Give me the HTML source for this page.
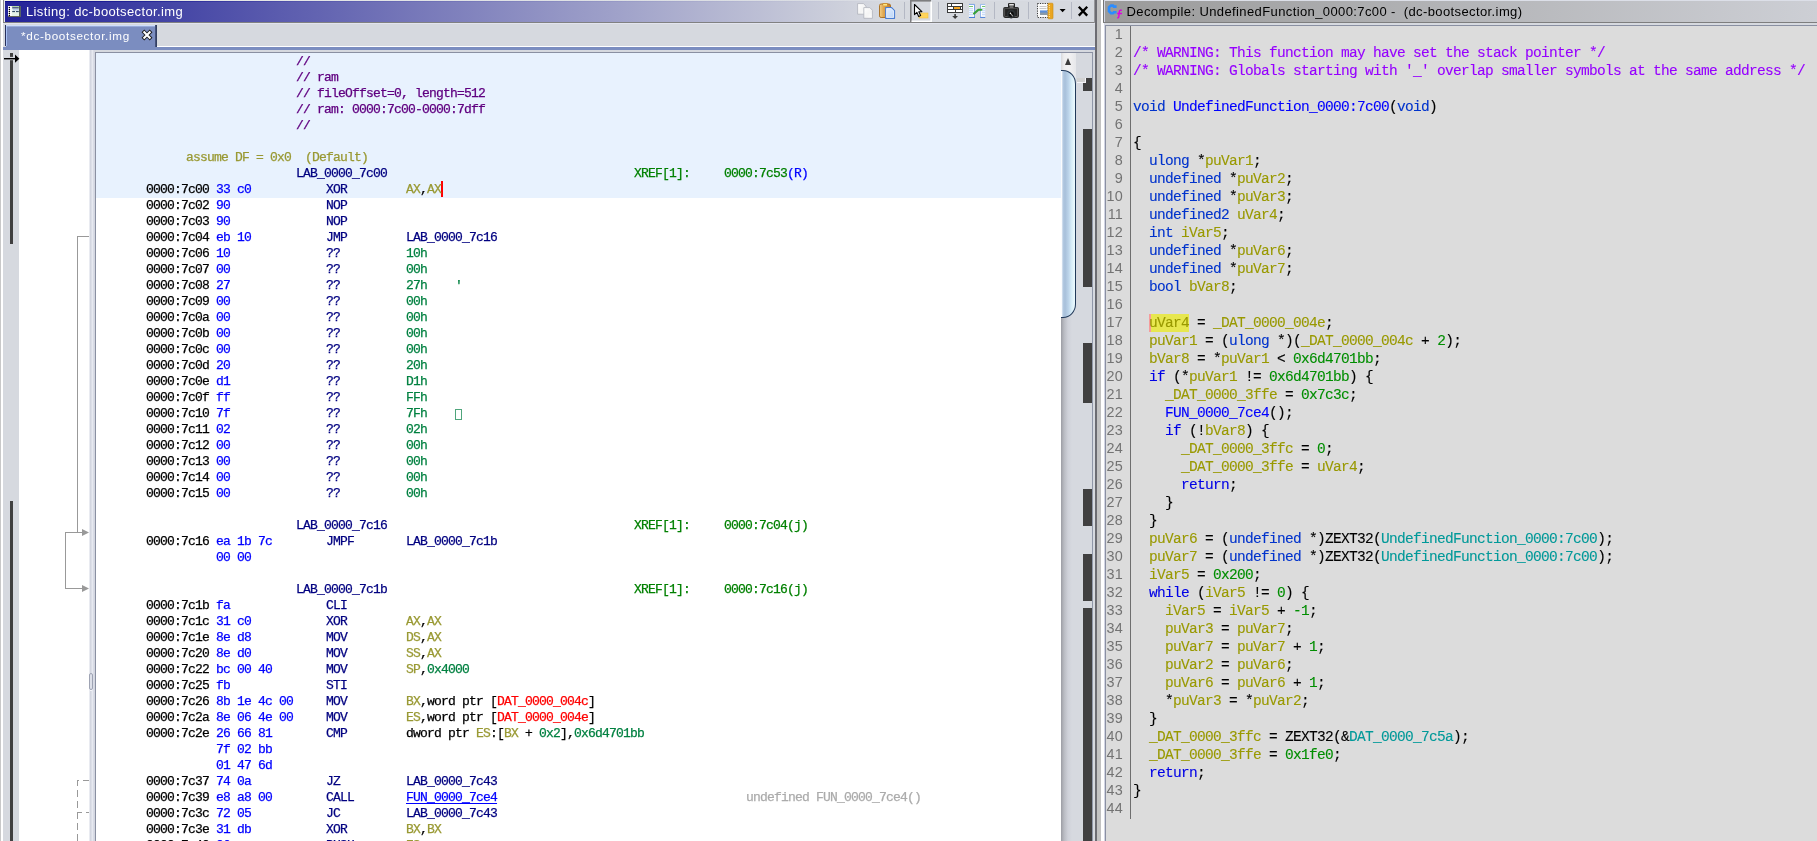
<!DOCTYPE html>
<html><head><meta charset="utf-8"><title>Ghidra</title>
<style>
html,body{margin:0;padding:0}
body{width:1817px;height:841px;overflow:hidden;position:relative;background:#d6d9df;font-family:"Liberation Sans",sans-serif}
.abs,.t,.d,.ln,.box,div,i,svg{position:absolute}
/* ---- listing title bar ---- */
#edgeL{left:0;top:0;width:3px;height:841px;background:linear-gradient(90deg,#b4b4b4 0,#dcdcdc 1px,#fff 1px,#fff 3px)}
#topline{left:4px;top:0;width:1813px;height:1px;background:linear-gradient(90deg,#ebece5 0,#e2e4e6 400px,#d9dce3 850px,#d9dce3 1090px,#dcdfe8 1100px)}
#ltitle{left:5px;top:1px;width:1089px;height:21px;background:linear-gradient(90deg,#232398 0,#d6d9df 880px,#d6d9df 100%)}
#ltitleb{left:3px;top:22px;width:1092px;height:1px;background:#818181}
#ltext{left:26px;top:1px;height:21px;line-height:22px;font-size:13px;letter-spacing:0.37px;color:#fff;white-space:pre}
/* tab */
#tabhl{left:3px;top:23px;width:1092px;height:1px;background:#e2e4ee}
#tab{left:6px;top:25px;width:149px;height:22px;background:linear-gradient(180deg,#eef4ff 0,#b4c8f4 1px,#7b8dc0 2px);box-sizing:border-box}
#tabl{left:5px;top:25px;width:1px;height:21px;background:#28305c}
#tabr{left:155px;top:25px;width:2px;height:22px;background:linear-gradient(90deg,#4c5a86,#2a3556)}
#tabtext{left:21px;top:26px;height:20px;line-height:20px;font-size:11.7px;letter-spacing:0.67px;color:#fff;white-space:pre}
#whiteline{left:157px;top:46px;width:938px;height:1px;background:#fff}
#band{left:3px;top:47px;width:1092px;height:3px;background:#7b8dc0}
/* margin */
#strip{left:3px;top:50px;width:16px;height:791px;background:#d6d9df}
#wmargin{left:19px;top:50px;width:71px;height:791px;background:#fff}
#div1{left:89px;top:50px;width:6px;height:791px;background:linear-gradient(90deg,#e9ebf1 0,#e9ebf1 1px,#d3d6e0 1px,#d3d6e0 2px,#dcdfe8 2px,#dcdfe8 3px,#e7e9f0 3px,#e7e9f0 4px,#d9dce6 4px,#d9dce6 5px,#d4d7e1 5px)}
#lbox{left:95px;top:52px;width:966px;height:789px;background:#fff;border-left:1px solid #8a90a2;border-top:1px solid #8a90a2;box-sizing:border-box;overflow:hidden}
#hl{left:96px;top:53px;width:965px;height:145px;background:#e8f2fe}
.t{font-family:"Liberation Mono",monospace;font-size:13px;letter-spacing:-0.8px;-webkit-text-stroke:0.25px;line-height:16px;height:16px;white-space:pre}
.a{color:#000}.b{color:#0000ff}.m{color:#000080}.r{color:#999933}.l{color:#000080}.n{color:#008040}.c{color:#600080}.x{color:#008000}.e{color:#ff0000}.k{color:#000}.g{color:#ababab}.f{color:#0000ff;text-decoration:underline;text-underline-offset:2px}
.box{width:7px;height:11px;border:1px solid #4fa57c;box-sizing:border-box}
/* decompile */
#dtitle{left:1105px;top:1px;width:712px;height:21px;background:linear-gradient(90deg,#9a9a9a 0,#cdcfd5 100%)}
#dtitleb{left:1103px;top:22px;width:714px;height:1px;background:#7e7e7e}
#dtext{left:1126.5px;top:1px;height:21px;line-height:22px;font-size:13px;letter-spacing:0.39px;color:#000;white-space:pre}
#dbox{left:1105px;top:25px;width:712px;height:816px;background:#dcdcdc;border-left:1px solid #8a90a2;border-top:1px solid #8a90a2;box-sizing:border-box}
#gline{left:1130px;top:26px;width:1px;height:793px;background:#6e6e6e}
.ln{left:1091px;width:32px;text-align:right;font-size:14.4px;letter-spacing:0.2px;color:#737373;line-height:18px;height:18px;white-space:pre}
.d{left:1133px;font-family:"Liberation Mono",monospace;font-size:14.5px;letter-spacing:-0.7px;-webkit-text-stroke:0.12px;line-height:18px;height:18px;white-space:pre;color:#000}
.dk{color:#0001e6}.dt{color:#0033cc}.dv{color:#999900}.dn{color:#008e00}.dg{color:#009999}.df{color:#0000ff}.dc{color:#9600ff}.dp{color:#000}
.hl{}

/* scrollbar + overview */
#sbtrack{left:1061px;top:53px;width:15px;height:788px;background:linear-gradient(90deg,#9c9da4 0,#b9bbc2 3px,#cfd1d9 7px,#d6d9df 11px,#d6d9df 15px)}
#sbbtn{left:1061px;top:53px;width:15px;height:30px;background:linear-gradient(90deg,#d8d9dc 0,#eeeeef 3px,#f2f2f3 8px,#e6e7ea 15px)}
#sbarrow{left:1065px;top:58px;width:0;height:0;border-left:3.5px solid transparent;border-right:3.5px solid transparent;border-bottom:7px solid #3c3c3c}
#sbthumb{left:1056px;top:70px;width:20px;height:248px;box-sizing:border-box;border:1px solid #223a5a;border-radius:0 13px 13px 0/0 14px 14px 0;background:linear-gradient(90deg,#fff 0,#fff 4.4px,#b4cae2 6px,#a8c0da 8px,#bcd4ea 11.5px,#d6ecf7 14.5px,#e8f8fd 17px,#e8f8fd 20px)}
#sbclip{left:1061px;top:53px;width:15px;height:788px;overflow:hidden}
#ov{left:1076px;top:53px;width:16px;height:788px;background:#d6d9df}
#ovb{left:1092px;top:52px;width:1px;height:789px;background:#9097a8}
#ovtop{left:1061px;top:52px;width:32px;height:1px;background:#8a90a2}
.ob{left:1083px;width:9px;background:#404040}
#ovind{left:1077px;top:78px;width:8px;height:4px;background:#d2d2d2;border-right:1px solid #f4f4f8;border-bottom:1px solid #f4f4f8}
/* margin */
#mbar{left:10px;top:53px;width:3px;height:191px;background:#404040}
.fl{background:#999}
/* splitter */
#split{left:1095px;top:0;width:10px;height:841px;background:linear-gradient(90deg,#6c6c72 0,#6c6c72 2px,#c2c2c2 2px,#c2c2c2 6px,#fff 6px,#fff 9px,#d2d5e4 9px,#d2d5e4 10px)}
</style></head><body><div id="root" style="left:0;top:0;width:1817px;height:841px;overflow:hidden;will-change:transform">
<div id="edgeL"></div><div id="topline"></div>
<div style="left:3px;top:0;width:1px;height:23px;background:#8c8c8c"></div><div style="left:4px;top:0;width:1px;height:22px;background:#e6e8ef"></div><div id="ltitle"></div><div style="left:5px;top:1px;width:880px;height:1px;background:linear-gradient(90deg,rgba(8,8,140,.8),rgba(8,8,140,.12) 300px,rgba(8,8,140,0))"></div><div id="ltitleb"></div><div id="ltext">Listing: dc-bootsector.img</div>
<div style="left:1094px;top:0;width:1px;height:23px;background:#97979b"></div><div id="tabhl"></div><div id="tab"></div><div id="tabl"></div><div style="left:6px;top:26px;width:1px;height:20px;background:#a9c2f5"></div><div id="tabr"></div><div id="tabtext">*dc-bootsector.img</div>
<div id="whiteline"></div><div id="band"></div>
<div id="strip"></div><div id="wmargin"></div><div id="div1"></div>
<div id="lbox"></div><div id="hl"></div><div id="cur" style="left:441px;top:181px;width:2px;height:16px;background:#ff0000"></div>
<span class="t c" style="left:296px;top:54px">//</span>
<span class="t c" style="left:296px;top:70px">// ram</span>
<span class="t c" style="left:296px;top:86px">// fileOffset=0, length=512</span>
<span class="t c" style="left:296px;top:102px">// ram: 0000:7c00-0000:7dff</span>
<span class="t c" style="left:296px;top:118px">//</span>
<span class="t r" style="left:186px;top:150px">assume DF = 0x0  (Default)</span>
<span class="t l" style="left:296px;top:166px">LAB_0000_7c00</span>
<span class="t x" style="left:634px;top:166px">XREF[1]:</span>
<span class="t x" style="left:724px;top:166px">0000:7c53</span>
<span class="t b" style="left:787px;top:166px">(R)</span>
<span class="t a" style="left:146px;top:182px">0000:7c00</span>
<span class="t b" style="left:216px;top:182px">33 c0</span>
<span class="t m" style="left:326px;top:182px">XOR</span>
<span class="t r" style="left:406px;top:182px">AX</span>
<span class="t k" style="left:420px;top:182px">,</span>
<span class="t r" style="left:427px;top:182px">AX</span>
<span class="t a" style="left:146px;top:198px">0000:7c02</span>
<span class="t b" style="left:216px;top:198px">90</span>
<span class="t m" style="left:326px;top:198px">NOP</span>
<span class="t a" style="left:146px;top:214px">0000:7c03</span>
<span class="t b" style="left:216px;top:214px">90</span>
<span class="t m" style="left:326px;top:214px">NOP</span>
<span class="t a" style="left:146px;top:230px">0000:7c04</span>
<span class="t b" style="left:216px;top:230px">eb 10</span>
<span class="t m" style="left:326px;top:230px">JMP</span>
<span class="t l" style="left:406px;top:230px">LAB_0000_7c16</span>
<span class="t a" style="left:146px;top:246px">0000:7c06</span>
<span class="t b" style="left:216px;top:246px">10</span>
<span class="t m" style="left:326px;top:246px">??</span>
<span class="t n" style="left:406px;top:246px">10h</span>
<span class="t a" style="left:146px;top:262px">0000:7c07</span>
<span class="t b" style="left:216px;top:262px">00</span>
<span class="t m" style="left:326px;top:262px">??</span>
<span class="t n" style="left:406px;top:262px">00h</span>
<span class="t a" style="left:146px;top:278px">0000:7c08</span>
<span class="t b" style="left:216px;top:278px">27</span>
<span class="t m" style="left:326px;top:278px">??</span>
<span class="t n" style="left:406px;top:278px">27h</span>
<span class="t n" style="left:455px;top:278px">&#x27;</span>
<span class="t a" style="left:146px;top:294px">0000:7c09</span>
<span class="t b" style="left:216px;top:294px">00</span>
<span class="t m" style="left:326px;top:294px">??</span>
<span class="t n" style="left:406px;top:294px">00h</span>
<span class="t a" style="left:146px;top:310px">0000:7c0a</span>
<span class="t b" style="left:216px;top:310px">00</span>
<span class="t m" style="left:326px;top:310px">??</span>
<span class="t n" style="left:406px;top:310px">00h</span>
<span class="t a" style="left:146px;top:326px">0000:7c0b</span>
<span class="t b" style="left:216px;top:326px">00</span>
<span class="t m" style="left:326px;top:326px">??</span>
<span class="t n" style="left:406px;top:326px">00h</span>
<span class="t a" style="left:146px;top:342px">0000:7c0c</span>
<span class="t b" style="left:216px;top:342px">00</span>
<span class="t m" style="left:326px;top:342px">??</span>
<span class="t n" style="left:406px;top:342px">00h</span>
<span class="t a" style="left:146px;top:358px">0000:7c0d</span>
<span class="t b" style="left:216px;top:358px">20</span>
<span class="t m" style="left:326px;top:358px">??</span>
<span class="t n" style="left:406px;top:358px">20h</span>
<span class="t a" style="left:146px;top:374px">0000:7c0e</span>
<span class="t b" style="left:216px;top:374px">d1</span>
<span class="t m" style="left:326px;top:374px">??</span>
<span class="t n" style="left:406px;top:374px">D1h</span>
<span class="t a" style="left:146px;top:390px">0000:7c0f</span>
<span class="t b" style="left:216px;top:390px">ff</span>
<span class="t m" style="left:326px;top:390px">??</span>
<span class="t n" style="left:406px;top:390px">FFh</span>
<span class="t a" style="left:146px;top:406px">0000:7c10</span>
<span class="t b" style="left:216px;top:406px">7f</span>
<span class="t m" style="left:326px;top:406px">??</span>
<span class="t n" style="left:406px;top:406px">7Fh</span>
<i class="box" style="left:455px;top:409px"></i>
<span class="t a" style="left:146px;top:422px">0000:7c11</span>
<span class="t b" style="left:216px;top:422px">02</span>
<span class="t m" style="left:326px;top:422px">??</span>
<span class="t n" style="left:406px;top:422px">02h</span>
<span class="t a" style="left:146px;top:438px">0000:7c12</span>
<span class="t b" style="left:216px;top:438px">00</span>
<span class="t m" style="left:326px;top:438px">??</span>
<span class="t n" style="left:406px;top:438px">00h</span>
<span class="t a" style="left:146px;top:454px">0000:7c13</span>
<span class="t b" style="left:216px;top:454px">00</span>
<span class="t m" style="left:326px;top:454px">??</span>
<span class="t n" style="left:406px;top:454px">00h</span>
<span class="t a" style="left:146px;top:470px">0000:7c14</span>
<span class="t b" style="left:216px;top:470px">00</span>
<span class="t m" style="left:326px;top:470px">??</span>
<span class="t n" style="left:406px;top:470px">00h</span>
<span class="t a" style="left:146px;top:486px">0000:7c15</span>
<span class="t b" style="left:216px;top:486px">00</span>
<span class="t m" style="left:326px;top:486px">??</span>
<span class="t n" style="left:406px;top:486px">00h</span>
<span class="t l" style="left:296px;top:518px">LAB_0000_7c16</span>
<span class="t x" style="left:634px;top:518px">XREF[1]:</span>
<span class="t x" style="left:724px;top:518px">0000:7c04</span>
<span class="t x" style="left:787px;top:518px">(j)</span>
<span class="t a" style="left:146px;top:534px">0000:7c16</span>
<span class="t b" style="left:216px;top:534px">ea 1b 7c</span>
<span class="t m" style="left:326px;top:534px">JMPF</span>
<span class="t l" style="left:406px;top:534px">LAB_0000_7c1b</span>
<span class="t b" style="left:216px;top:550px">00 00</span>
<span class="t l" style="left:296px;top:582px">LAB_0000_7c1b</span>
<span class="t x" style="left:634px;top:582px">XREF[1]:</span>
<span class="t x" style="left:724px;top:582px">0000:7c16</span>
<span class="t x" style="left:787px;top:582px">(j)</span>
<span class="t a" style="left:146px;top:598px">0000:7c1b</span>
<span class="t b" style="left:216px;top:598px">fa</span>
<span class="t m" style="left:326px;top:598px">CLI</span>
<span class="t a" style="left:146px;top:614px">0000:7c1c</span>
<span class="t b" style="left:216px;top:614px">31 c0</span>
<span class="t m" style="left:326px;top:614px">XOR</span>
<span class="t r" style="left:406px;top:614px">AX</span>
<span class="t k" style="left:420px;top:614px">,</span>
<span class="t r" style="left:427px;top:614px">AX</span>
<span class="t a" style="left:146px;top:630px">0000:7c1e</span>
<span class="t b" style="left:216px;top:630px">8e d8</span>
<span class="t m" style="left:326px;top:630px">MOV</span>
<span class="t r" style="left:406px;top:630px">DS</span>
<span class="t k" style="left:420px;top:630px">,</span>
<span class="t r" style="left:427px;top:630px">AX</span>
<span class="t a" style="left:146px;top:646px">0000:7c20</span>
<span class="t b" style="left:216px;top:646px">8e d0</span>
<span class="t m" style="left:326px;top:646px">MOV</span>
<span class="t r" style="left:406px;top:646px">SS</span>
<span class="t k" style="left:420px;top:646px">,</span>
<span class="t r" style="left:427px;top:646px">AX</span>
<span class="t a" style="left:146px;top:662px">0000:7c22</span>
<span class="t b" style="left:216px;top:662px">bc 00 40</span>
<span class="t m" style="left:326px;top:662px">MOV</span>
<span class="t r" style="left:406px;top:662px">SP</span>
<span class="t k" style="left:420px;top:662px">,</span>
<span class="t n" style="left:427px;top:662px">0x4000</span>
<span class="t a" style="left:146px;top:678px">0000:7c25</span>
<span class="t b" style="left:216px;top:678px">fb</span>
<span class="t m" style="left:326px;top:678px">STI</span>
<span class="t a" style="left:146px;top:694px">0000:7c26</span>
<span class="t b" style="left:216px;top:694px">8b 1e 4c 00</span>
<span class="t m" style="left:326px;top:694px">MOV</span>
<span class="t r" style="left:406px;top:694px">BX</span>
<span class="t k" style="left:420px;top:694px">,word ptr [</span>
<span class="t e" style="left:497px;top:694px">DAT_0000_004c</span>
<span class="t k" style="left:588px;top:694px">]</span>
<span class="t a" style="left:146px;top:710px">0000:7c2a</span>
<span class="t b" style="left:216px;top:710px">8e 06 4e 00</span>
<span class="t m" style="left:326px;top:710px">MOV</span>
<span class="t r" style="left:406px;top:710px">ES</span>
<span class="t k" style="left:420px;top:710px">,word ptr [</span>
<span class="t e" style="left:497px;top:710px">DAT_0000_004e</span>
<span class="t k" style="left:588px;top:710px">]</span>
<span class="t a" style="left:146px;top:726px">0000:7c2e</span>
<span class="t b" style="left:216px;top:726px">26 66 81</span>
<span class="t m" style="left:326px;top:726px">CMP</span>
<span class="t k" style="left:406px;top:726px">dword ptr </span>
<span class="t r" style="left:476px;top:726px">ES</span>
<span class="t k" style="left:490px;top:726px">:[</span>
<span class="t r" style="left:504px;top:726px">BX</span>
<span class="t k" style="left:518px;top:726px"> + </span>
<span class="t n" style="left:539px;top:726px">0x2</span>
<span class="t k" style="left:560px;top:726px">],</span>
<span class="t n" style="left:574px;top:726px">0x6d4701bb</span>
<span class="t b" style="left:216px;top:742px">7f 02 bb</span>
<span class="t b" style="left:216px;top:758px">01 47 6d</span>
<span class="t a" style="left:146px;top:774px">0000:7c37</span>
<span class="t b" style="left:216px;top:774px">74 0a</span>
<span class="t m" style="left:326px;top:774px">JZ</span>
<span class="t l" style="left:406px;top:774px">LAB_0000_7c43</span>
<span class="t a" style="left:146px;top:790px">0000:7c39</span>
<span class="t b" style="left:216px;top:790px">e8 a8 00</span>
<span class="t m" style="left:326px;top:790px">CALL</span>
<span class="t f" style="left:406px;top:790px">FUN_0000_7ce4</span>
<span class="t g" style="left:746px;top:790px">undefined FUN_0000_7ce4()</span>
<span class="t a" style="left:146px;top:806px">0000:7c3c</span>
<span class="t b" style="left:216px;top:806px">72 05</span>
<span class="t m" style="left:326px;top:806px">JC</span>
<span class="t l" style="left:406px;top:806px">LAB_0000_7c43</span>
<span class="t a" style="left:146px;top:822px">0000:7c3e</span>
<span class="t b" style="left:216px;top:822px">31 db</span>
<span class="t m" style="left:326px;top:822px">XOR</span>
<span class="t r" style="left:406px;top:822px">BX</span>
<span class="t k" style="left:420px;top:822px">,</span>
<span class="t r" style="left:427px;top:822px">BX</span>
<span class="t a" style="left:146px;top:838px">0000:7c40</span>
<span class="t b" style="left:216px;top:838px">06</span>
<span class="t m" style="left:326px;top:838px">PUSH</span>
<span class="t r" style="left:406px;top:838px">ES</span>

<div id="sbtrack"></div><div id="sbbtn"></div><div id="sbarrow"></div>
<div id="sbclip"><div id="sbthumb" style="left:-5px;top:17px"></div></div>
<div id="ov"></div><div id="ovb"></div><div id="ovtop"></div>
<div class="ob" style="top:78px;height:13px"></div>
<div class="ob" style="top:129px;height:158px"></div>
<div class="ob" style="top:343px;height:60px"></div>
<div class="ob" style="top:489px;height:37px"></div>
<div class="ob" style="top:554px;height:47px"></div>
<div class="ob" style="top:608px;height:233px"></div>
<div id="ovind"></div>
<div id="mbar"></div><div style="left:10px;top:501px;width:3px;height:340px;background:#404040"></div>
<svg id="marrow" style="left:3px;top:50px" width="20" height="16" viewBox="0 0 20 16"><rect x="5" y="6.9" width="7" height="3.3" fill="#d6d9df"/><rect x="1" y="8" width="12" height="1.4" fill="#000"/><path d="M12 4.6 L16.4 8.7 L12 12.8 Z" fill="#000"/></svg>
<svg id="flows" style="left:19px;top:50px" width="72" height="791" viewBox="19 50 72 791" shape-rendering="crispEdges">
<g fill="none" stroke="#999" stroke-width="1">
<path d="M89 236.5 H77.5 V532.5"/>
<path d="M82 532.5 H65.5 V588.5 H82"/>
<path d="M77.5 841 V780.5 H89" stroke-dasharray="7 4"/>
<path d="M77.5 812.5 H89" stroke-dasharray="4 4 6 4"/>
</g>
<g fill="#999" shape-rendering="auto"><path d="M82 529 L89 532.5 L82 536Z"/><path d="M82 585 L89 588.5 L82 592Z"/></g>
</svg>
<div id="grip" style="left:89px;top:673px;width:4px;height:17px;border:1px solid #9ea3b3;border-radius:2px;background:#dde0e9;box-sizing:border-box"></div><div style="left:90px;top:690px;width:2px;height:1px;background:#f4f5f9"></div>
<div id="split"></div>
<div style="left:1103px;top:0;width:1px;height:23px;background:#747474"></div><div id="dtitle"></div><div id="dtitleb"></div><div id="dtext">Decompile: UndefinedFunction_0000:7c00 -  (dc-bootsector.img)</div>
<div id="dbox"></div><div id="gline"></div><div style="left:1149px;top:314px;width:40px;height:18px;background:#e7e74f"></div><div style="left:1149px;top:314px;width:2px;height:18px;background:#f59c9c"></div>
<span class="ln" style="top:25px">1</span>
<span class="ln" style="top:43px">2</span>
<span class="d" style="top:44px"><span class="dc">/* WARNING: This function may have set the stack pointer */</span></span>
<span class="ln" style="top:61px">3</span>
<span class="d" style="top:62px"><span class="dc">/* WARNING: Globals starting with &#x27;_&#x27; overlap smaller symbols at the same address */</span></span>
<span class="ln" style="top:79px">4</span>
<span class="ln" style="top:97px">5</span>
<span class="d" style="top:98px"><span class="dt">void</span><span class="dp"> </span><span class="df">UndefinedFunction_0000:7c00</span><span class="dp">(</span><span class="dt">void</span><span class="dp">)</span></span>
<span class="ln" style="top:115px">6</span>
<span class="ln" style="top:133px">7</span>
<span class="d" style="top:134px"><span class="dp">{</span></span>
<span class="ln" style="top:151px">8</span>
<span class="d" style="top:152px"><span class="dp">  </span><span class="dt">ulong</span><span class="dp"> *</span><span class="dv">puVar1</span><span class="dp">;</span></span>
<span class="ln" style="top:169px">9</span>
<span class="d" style="top:170px"><span class="dp">  </span><span class="dt">undefined</span><span class="dp"> *</span><span class="dv">puVar2</span><span class="dp">;</span></span>
<span class="ln" style="top:187px">10</span>
<span class="d" style="top:188px"><span class="dp">  </span><span class="dt">undefined</span><span class="dp"> *</span><span class="dv">puVar3</span><span class="dp">;</span></span>
<span class="ln" style="top:205px">11</span>
<span class="d" style="top:206px"><span class="dp">  </span><span class="dt">undefined2</span><span class="dp"> </span><span class="dv">uVar4</span><span class="dp">;</span></span>
<span class="ln" style="top:223px">12</span>
<span class="d" style="top:224px"><span class="dp">  </span><span class="dt">int</span><span class="dp"> </span><span class="dv">iVar5</span><span class="dp">;</span></span>
<span class="ln" style="top:241px">13</span>
<span class="d" style="top:242px"><span class="dp">  </span><span class="dt">undefined</span><span class="dp"> *</span><span class="dv">puVar6</span><span class="dp">;</span></span>
<span class="ln" style="top:259px">14</span>
<span class="d" style="top:260px"><span class="dp">  </span><span class="dt">undefined</span><span class="dp"> *</span><span class="dv">puVar7</span><span class="dp">;</span></span>
<span class="ln" style="top:277px">15</span>
<span class="d" style="top:278px"><span class="dp">  </span><span class="dt">bool</span><span class="dp"> </span><span class="dv">bVar8</span><span class="dp">;</span></span>
<span class="ln" style="top:295px">16</span>
<span class="ln" style="top:313px">17</span>
<span class="d" style="top:314px"><span class="dp">  </span><span class="dv hl">uVar4</span><span class="dp"> = </span><span class="dv">_DAT_0000_004e</span><span class="dp">;</span></span>
<span class="ln" style="top:331px">18</span>
<span class="d" style="top:332px"><span class="dp">  </span><span class="dv">puVar1</span><span class="dp"> = (</span><span class="dt">ulong</span><span class="dp"> *)(</span><span class="dv">_DAT_0000_004c</span><span class="dp"> + </span><span class="dn">2</span><span class="dp">);</span></span>
<span class="ln" style="top:349px">19</span>
<span class="d" style="top:350px"><span class="dp">  </span><span class="dv">bVar8</span><span class="dp"> = *</span><span class="dv">puVar1</span><span class="dp"> &lt; </span><span class="dn">0x6d4701bb</span><span class="dp">;</span></span>
<span class="ln" style="top:367px">20</span>
<span class="d" style="top:368px"><span class="dp">  </span><span class="dk">if</span><span class="dp"> (*</span><span class="dv">puVar1</span><span class="dp"> != </span><span class="dn">0x6d4701bb</span><span class="dp">) {</span></span>
<span class="ln" style="top:385px">21</span>
<span class="d" style="top:386px"><span class="dp">    </span><span class="dv">_DAT_0000_3ffe</span><span class="dp"> = </span><span class="dn">0x7c3c</span><span class="dp">;</span></span>
<span class="ln" style="top:403px">22</span>
<span class="d" style="top:404px"><span class="dp">    </span><span class="df">FUN_0000_7ce4</span><span class="dp">();</span></span>
<span class="ln" style="top:421px">23</span>
<span class="d" style="top:422px"><span class="dp">    </span><span class="dk">if</span><span class="dp"> (!</span><span class="dv">bVar8</span><span class="dp">) {</span></span>
<span class="ln" style="top:439px">24</span>
<span class="d" style="top:440px"><span class="dp">      </span><span class="dv">_DAT_0000_3ffc</span><span class="dp"> = </span><span class="dn">0</span><span class="dp">;</span></span>
<span class="ln" style="top:457px">25</span>
<span class="d" style="top:458px"><span class="dp">      </span><span class="dv">_DAT_0000_3ffe</span><span class="dp"> = </span><span class="dv">uVar4</span><span class="dp">;</span></span>
<span class="ln" style="top:475px">26</span>
<span class="d" style="top:476px"><span class="dp">      </span><span class="dk">return</span><span class="dp">;</span></span>
<span class="ln" style="top:493px">27</span>
<span class="d" style="top:494px"><span class="dp">    }</span></span>
<span class="ln" style="top:511px">28</span>
<span class="d" style="top:512px"><span class="dp">  }</span></span>
<span class="ln" style="top:529px">29</span>
<span class="d" style="top:530px"><span class="dp">  </span><span class="dv">puVar6</span><span class="dp"> = (</span><span class="dt">undefined</span><span class="dp"> *)ZEXT32(</span><span class="dg">UndefinedFunction_0000:7c00</span><span class="dp">);</span></span>
<span class="ln" style="top:547px">30</span>
<span class="d" style="top:548px"><span class="dp">  </span><span class="dv">puVar7</span><span class="dp"> = (</span><span class="dt">undefined</span><span class="dp"> *)ZEXT32(</span><span class="dg">UndefinedFunction_0000:7c00</span><span class="dp">);</span></span>
<span class="ln" style="top:565px">31</span>
<span class="d" style="top:566px"><span class="dp">  </span><span class="dv">iVar5</span><span class="dp"> = </span><span class="dn">0x200</span><span class="dp">;</span></span>
<span class="ln" style="top:583px">32</span>
<span class="d" style="top:584px"><span class="dp">  </span><span class="dk">while</span><span class="dp"> (</span><span class="dv">iVar5</span><span class="dp"> != </span><span class="dn">0</span><span class="dp">) {</span></span>
<span class="ln" style="top:601px">33</span>
<span class="d" style="top:602px"><span class="dp">    </span><span class="dv">iVar5</span><span class="dp"> = </span><span class="dv">iVar5</span><span class="dp"> + </span><span class="dn">-1</span><span class="dp">;</span></span>
<span class="ln" style="top:619px">34</span>
<span class="d" style="top:620px"><span class="dp">    </span><span class="dv">puVar3</span><span class="dp"> = </span><span class="dv">puVar7</span><span class="dp">;</span></span>
<span class="ln" style="top:637px">35</span>
<span class="d" style="top:638px"><span class="dp">    </span><span class="dv">puVar7</span><span class="dp"> = </span><span class="dv">puVar7</span><span class="dp"> + </span><span class="dn">1</span><span class="dp">;</span></span>
<span class="ln" style="top:655px">36</span>
<span class="d" style="top:656px"><span class="dp">    </span><span class="dv">puVar2</span><span class="dp"> = </span><span class="dv">puVar6</span><span class="dp">;</span></span>
<span class="ln" style="top:673px">37</span>
<span class="d" style="top:674px"><span class="dp">    </span><span class="dv">puVar6</span><span class="dp"> = </span><span class="dv">puVar6</span><span class="dp"> + </span><span class="dn">1</span><span class="dp">;</span></span>
<span class="ln" style="top:691px">38</span>
<span class="d" style="top:692px"><span class="dp">    *</span><span class="dv">puVar3</span><span class="dp"> = *</span><span class="dv">puVar2</span><span class="dp">;</span></span>
<span class="ln" style="top:709px">39</span>
<span class="d" style="top:710px"><span class="dp">  }</span></span>
<span class="ln" style="top:727px">40</span>
<span class="d" style="top:728px"><span class="dp">  </span><span class="dv">_DAT_0000_3ffc</span><span class="dp"> = ZEXT32(&amp;</span><span class="dg">DAT_0000_7c5a</span><span class="dp">);</span></span>
<span class="ln" style="top:745px">41</span>
<span class="d" style="top:746px"><span class="dp">  </span><span class="dv">_DAT_0000_3ffe</span><span class="dp"> = </span><span class="dn">0x1fe0</span><span class="dp">;</span></span>
<span class="ln" style="top:763px">42</span>
<span class="d" style="top:764px"><span class="dp">  </span><span class="dk">return</span><span class="dp">;</span></span>
<span class="ln" style="top:781px">43</span>
<span class="d" style="top:782px"><span class="dp">}</span></span>
<span class="ln" style="top:799px">44</span>

<svg id="tb" style="left:850px;top:0px" width="245" height="23" viewBox="850 0 245 23">
<!-- copy (disabled) -->
<defs><linearGradient id="gpg" x1="0" y1="0" x2="1" y2="1"><stop offset="0" stop-color="#fff"/><stop offset=".55" stop-color="#f4f4f4"/><stop offset="1" stop-color="#fff"/></linearGradient>
<linearGradient id="gcb" x1="0" y1="0" x2="1" y2="0"><stop offset="0" stop-color="#f3cf86"/><stop offset=".35" stop-color="#e0a851"/><stop offset="1" stop-color="#c27c28"/></linearGradient>
<linearGradient id="gbp" x1="0" y1="0" x2="1" y2="1"><stop offset="0" stop-color="#e4efff"/><stop offset="1" stop-color="#b9d4f7"/></linearGradient></defs>
<g stroke="#aeb1ba" stroke-width="0.8" fill="url(#gpg)" stroke-linejoin="round">
<path d="M857.6 3.6 H863.4 L866 6.2 V14.2 H857.6Z"/>
<path d="M863.8 7.6 H869.8 L872.4 10.2 V18.3 H863.8Z"/>
</g>
<!-- paste -->
<rect x="879.5" y="4" width="11" height="13.5" rx="1.6" fill="url(#gcb)" stroke="#a66a1a" stroke-width="0.9"/>
<rect x="882.4" y="3" width="5.4" height="2.6" rx="0.8" fill="#c88a2e"/>
<rect x="883.2" y="3.9" width="3.8" height="1.7" fill="#ffe680"/>
<path d="M885.7 7.7 H891.6 L894.5 10.6 V18.3 H885.7Z" fill="url(#gbp)" stroke="#4a7dd2" stroke-width="1.2" stroke-linejoin="round"/>
<path d="M886.6 8.6 H891.2 L893.6 11 V17.4 H886.6Z" fill="none" stroke="#fff" stroke-width="0.6"/>
<!-- sep -->
<rect x="904" y="2" width="1" height="17" fill="#b4b8c4"/>
<!-- selected toggle -->
<rect x="910" y="0" width="22" height="22" fill="#d6d9df"/>
<rect x="910" y="0" width="21" height="1.6" fill="#7d7d7f"/>
<rect x="910" y="0" width="1.6" height="22" fill="#7d7d7f"/>
<rect x="930.4" y="1.6" width="1.6" height="20.4" fill="#fff"/>
<rect x="911.6" y="20.6" width="20.4" height="1.4" fill="#fff"/>
<rect x="919" y="13" width="9" height="5" fill="#ffd45a" stroke="#f0c040" stroke-width="0.6"/>
<path d="M914.5 4.5 V14.6 L916.9 12.4 L918.7 16.4 L920.6 15.6 L918.8 11.7 L921.9 11.6 Z" fill="#fff" stroke="#000" stroke-width="1.1" stroke-linejoin="round"/>
<!-- sep -->
<rect x="938" y="2" width="1" height="17" fill="#b4b8c4"/>
<!-- table w/ arrow -->
<rect x="947.5" y="3.5" width="15" height="9" fill="#fff" stroke="#3a3a3a"/>
<path d="M947.5 6.5 H962.5 M947.5 9.5 H962.5 M951.5 3.5 V6.5 M960.5 6.5 V9.5 M953.5 6.5 V9.5 M955.5 9.5 V12.5" stroke="#3a3a3a" fill="none"/>
<rect x="954" y="7" width="6" height="2" fill="#f5a623"/>
<path d="M954.3 14 H955.9 V16 H958 L955.1 19 L952.2 16 H954.3Z" fill="#3a3a3a"/>
<!-- diff -->
<rect x="969" y="4.3" width="5.6" height="13.2" fill="#fdfeff"/>
<path d="M969 4.4 H974.5 V17.5 H969" fill="none" stroke="#6b98e2" stroke-width="0.9"/>
<rect x="969" y="16.9" width="6" height="1.1" fill="#4a7cd2"/>
<rect x="969" y="6" width="4" height="0.9" fill="#62bd5e"/>
<g fill="#a9c6f2"><rect x="969" y="8.4" width="4" height="0.8"/><rect x="969" y="10.4" width="4" height="0.8"/><rect x="969" y="12.4" width="4" height="0.8"/><rect x="969" y="14.4" width="4" height="0.8"/></g>
<rect x="980.4" y="4.3" width="4.8" height="13.2" fill="#fdfeff"/>
<path d="M985.2 4.4 H980.5 V17.5 H985.2" fill="none" stroke="#8fb2ea" stroke-width="0.9"/>
<rect x="980.2" y="16.9" width="5" height="1.1" fill="#5a88d8"/>
<rect x="982" y="6" width="3.2" height="0.9" fill="#62bd5e"/>
<g fill="#a9c6f2"><rect x="982" y="8.4" width="3.2" height="0.8"/><rect x="982" y="10.4" width="3.2" height="0.8"/><rect x="982" y="12.4" width="3.2" height="0.8"/><rect x="982" y="14.4" width="3.2" height="0.8"/></g>
<path d="M974 13.6 L978.4 9.7 H981.4" stroke="#37a03a" stroke-width="2.1" fill="none" stroke-linecap="round" stroke-linejoin="round"/>
<!-- sep -->
<rect x="994" y="2" width="1" height="17" fill="#b4b8c4"/>
<!-- camera -->
<rect x="1008" y="2.9" width="7" height="5" rx="1.2" fill="#222"/>
<rect x="1009.2" y="3.9" width="4.6" height="1.7" fill="#e4e4e4"/>
<rect x="1003.2" y="6.9" width="15.8" height="11" rx="1.8" fill="#242424"/>
<rect x="1004.6" y="8.3" width="13" height="8.2" rx="0.6" fill="none" stroke="#6a6a6a" stroke-width="0.7"/>
<rect x="1009.6" y="6.4" width="3.8" height="1.2" fill="#9a9a9a"/>
<circle cx="1011.2" cy="14" r="4.4" fill="#2c3134"/>
<circle cx="1011.2" cy="14.2" r="2.6" fill="#0c0c0c"/>
<path d="M1010.6 13.5 L1012.6 15.8" stroke="#9c9c9c" stroke-width="1.1" stroke-linecap="round"/><circle cx="1010.4" cy="13.3" r="0.75" fill="#fff"/>
<!-- sep -->
<rect x="1028" y="2" width="1" height="17" fill="#b4b8c4"/>
<!-- image/ruler -->
<rect x="1037.5" y="3.5" width="10.5" height="14" fill="#fbfbfb" stroke="#3a3a3a" stroke-dasharray="1.2 1.2"/>
<rect x="1039.5" y="6" width="7" height="1" fill="#c8c8c8"/><rect x="1039.5" y="8" width="7" height="1" fill="#c8c8c8"/>
<rect x="1040" y="10.4" width="7.6" height="4.6" fill="#5c8fd8"/><rect x="1040" y="12.6" width="7.6" height="2.4" fill="#8a9aa8"/>
<rect x="1048" y="3.2" width="5" height="15.6" rx="0.8" fill="#eaa520" stroke="#c88a10" stroke-width="0.6"/>
<path d="M1049.3 5 V17.4" stroke="#ffe9a0" stroke-width="1" stroke-dasharray="1 1.2"/>
<!-- dropdown -->
<path d="M1059.6 9 H1065.6 L1062.6 12.2Z" fill="#000"/>
<!-- sep -->
<rect x="1071" y="2" width="1" height="17" fill="#b4b8c4"/>
<!-- close -->
<path d="M1078.8 6.8 L1087.2 15.6 M1087.2 6.8 L1078.8 15.6" stroke="#000" stroke-width="2.3" fill="none"/>
</svg>
<!-- listing icon -->
<svg style="left:7px;top:5px" width="15" height="13" viewBox="7 5 15 13">
<rect x="8" y="6" width="12.6" height="10.8" fill="#e4f2e6"/>
<rect x="8" y="6" width="3.6" height="10.8" fill="#fff"/>
<rect x="11.8" y="6" width="8" height="1" fill="#b4d8a8"/>
<rect x="19.2" y="6" width="1.4" height="10.8" fill="#2c3a2c"/>
<rect x="8" y="16" width="12.6" height="0.9" fill="#5a5a4a"/>
<g fill="#000"><circle cx="9.4" cy="7.5" r="0.75"/><circle cx="9.4" cy="9.5" r="0.75"/><circle cx="9.4" cy="11.5" r="0.75"/><circle cx="9.4" cy="13.5" r="0.75"/><circle cx="9.4" cy="15.5" r="0.75"/></g>
<rect x="12.2" y="7.2" width="6.6" height="1.2" fill="#304070"/>
<rect x="12.8" y="9.2" width="6" height="1.2" fill="#b0c4f0"/>
<rect x="12.2" y="11.1" width="2.8" height="1" fill="#203858"/><rect x="16" y="11.1" width="2.8" height="1" fill="#203858"/>
</svg>
<!-- tab close X -->
<svg style="left:140px;top:28px" width="14" height="14" viewBox="140 28 14 14">
<path d="M144.3 32.3 L149.7 37.7 M149.7 32.3 L144.3 37.7" stroke="#1c1c1c" stroke-width="3.9" stroke-linecap="square" fill="none"/>
<path d="M144.3 32.3 L149.7 37.7 M149.7 32.3 L144.3 37.7" stroke="#fff" stroke-width="2.1" stroke-linecap="square" fill="none"/>
</svg>
<!-- Cf icon -->
<svg style="left:1105px;top:2px" width="20" height="19" viewBox="1105 2 20 19">
<path d="M1116.6 6.6 H1113.8 L1113 5.6 H1111 L1109 7.4 V11.2 L1111 13.2 H1113 L1113.8 12.2 H1116.6" fill="none" stroke="#2b8cff" stroke-width="2.6" stroke-linejoin="miter"/>
<path d="M1121.8 10.2 H1120.6 Q1119.4 10.2 1119.3 11.6 L1118.8 16.6 Q1118.6 18 1117.2 17.8 M1117.2 13.5 H1122" fill="none" stroke="#e000e0" stroke-width="1.5"/>
</svg>
</div></body></html>
